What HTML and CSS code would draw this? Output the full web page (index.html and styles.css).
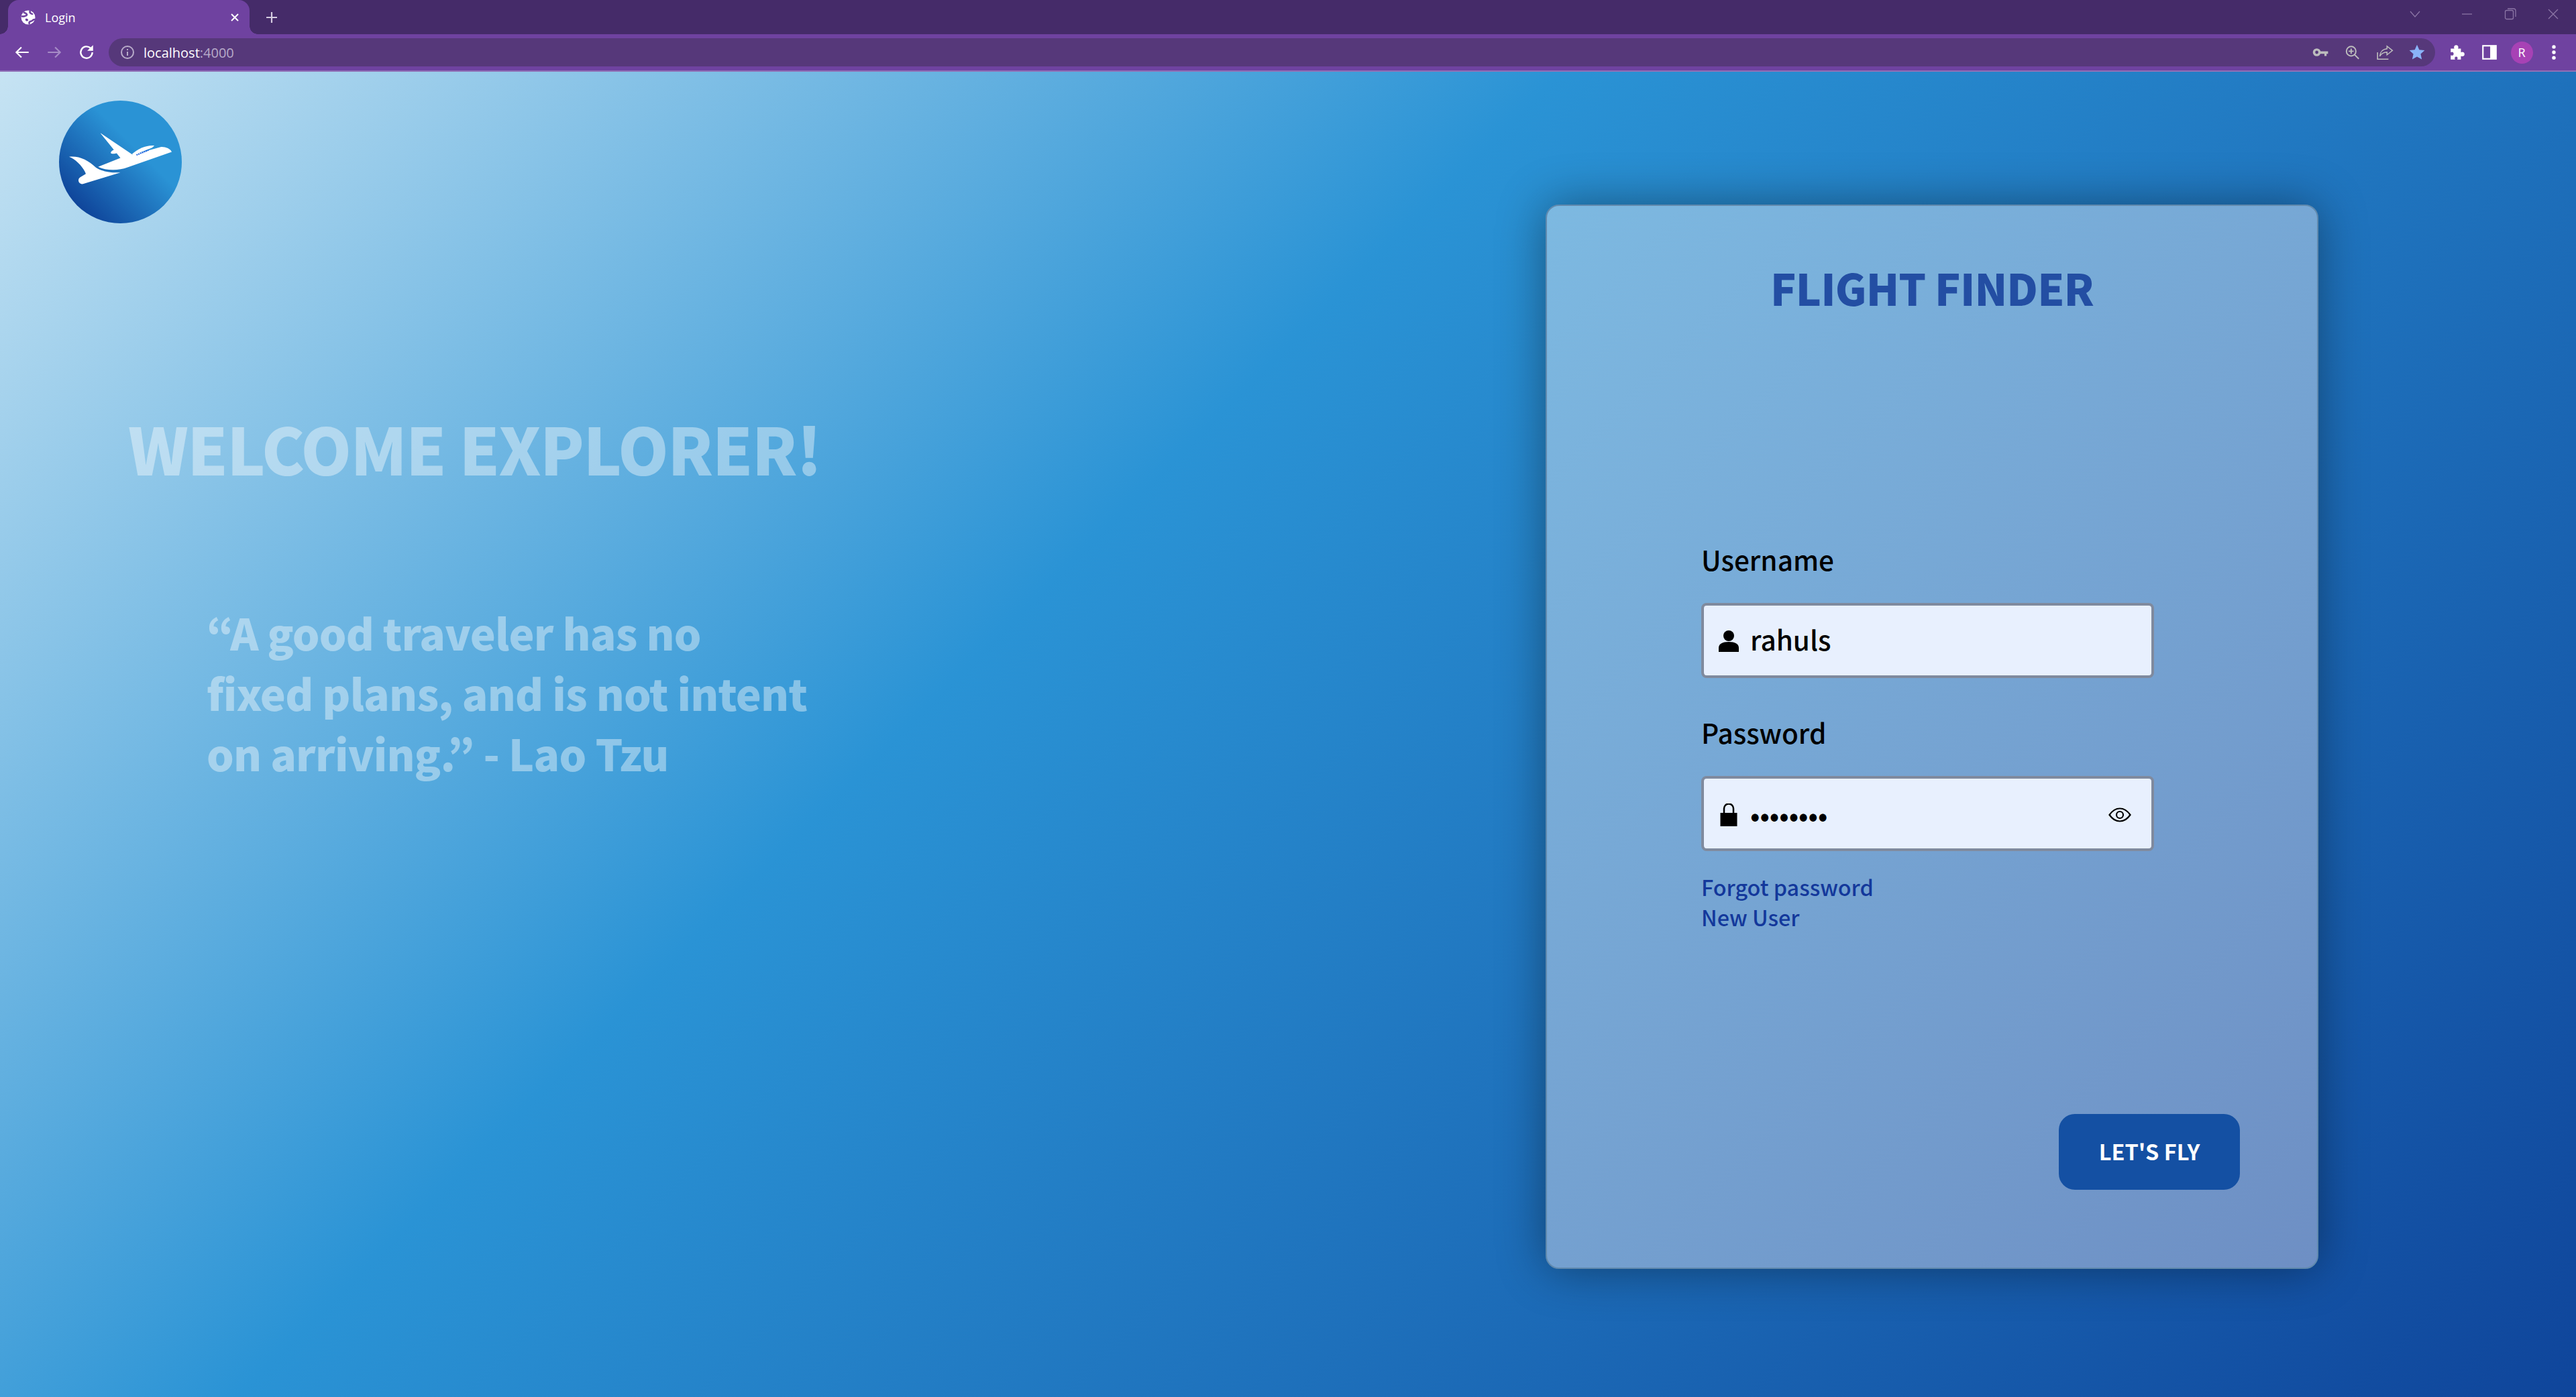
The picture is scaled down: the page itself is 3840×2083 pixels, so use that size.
FILE: index.html
```html
<!DOCTYPE html>
<html lang="en">
<head>
  <meta charset="UTF-8">
  <title>Login</title>
  <link rel="stylesheet" href="styles.css">
</head>
<body>
  <div class="page">
    <!-- Browser chrome -->
    <div class="browser">
      <div class="tabstrip">
        <div class="tab">
          <svg class="favicon" viewBox="0 0 22 22"><circle cx="11" cy="11" r="10.5" fill="#fff"/><path d="M4 3.500c2 .5 4 1 5 3 .5 1.500-1.500 2-3 2.500S3 10 1 9M13 21c-1-2-.5-3.500 1-4 1.500-.5 3-.5 4-2 1-1 2-1 3.500-1M14 1c-1 2-.5 3 1 4s2 1 3 .5" fill="none" stroke="#6f42a0" stroke-width="2.600"/><path d="M7 13c2-.5 3.500 0 4 1.500s-1 2-2.500 2-2-2.500-1.500-3.500z" fill="#6f42a0"/></svg>
          <span class="tab-title">Login</span>
          <svg class="tab-close" viewBox="0 0 14 14"><path d="M2 2l10 10M12 2L2 12" stroke="#fff" stroke-width="2"/></svg>
        </div>
        <svg class="new-tab" viewBox="0 0 18 18"><path d="M9 1v16M1 9h16" stroke="#d5cce0" stroke-width="2.200"/></svg>
        <div class="window-controls">
          <svg class="chevron" viewBox="0 0 18 18"><path d="M2 5l7 8 7-8" fill="none" stroke="#8b75a5" stroke-width="1.300"/></svg>
          <svg viewBox="0 0 18 18"><path d="M1 9h15" stroke="#8b75a5" stroke-width="1.300"/></svg>
          <svg viewBox="0 0 18 18"><rect x="1.500" y="3.500" width="12" height="13" rx="2" fill="none" stroke="#8b75a5" stroke-width="1.300"/><path d="M5 1h9a3 3 0 0 1 3 3v9" fill="none" stroke="#8b75a5" stroke-width="1.300"/></svg>
          <svg viewBox="0 0 18 18"><path d="M2 2l14 14M16 2L2 16" stroke="#8b75a5" stroke-width="1.300"/></svg>
        </div>
      </div>
      <div class="toolbar">
        <div class="nav-btn"><svg viewBox="0 0 24 24"><path d="M21 12H4M11 5l-7 7 7 7" fill="none" stroke="#fff" stroke-width="2"/></svg></div>
        <div class="nav-btn"><svg viewBox="0 0 24 24"><path d="M3 12h17M13 5l7 7-7 7" fill="none" stroke="#a68bc6" stroke-width="2"/></svg></div>
        <div class="nav-btn"><svg viewBox="0 0 24 24"><path d="M20 12a8 8 0 1 1-2.500-5.800" fill="none" stroke="#fff" stroke-width="2.200"/><path d="M21 2v8h-8z" fill="#fff"/></svg></div>
        <div class="omnibox">
          <svg class="info" viewBox="0 0 22 22"><circle cx="11" cy="11" r="9" fill="none" stroke="#b8abc9" stroke-width="2"/><path d="M11 10v6M11 6v2" stroke="#b8abc9" stroke-width="2"/></svg>
          <span class="url">localhost<span class="url-port">:4000</span></span>
          <div class="omni-icons">
            <div class="nav-btn"><svg viewBox="0 0 24 24"><circle cx="7" cy="12" r="3.800" fill="none" stroke="#bdbdbd" stroke-width="3.200"/><path d="M10 10.500h12.500v3.500h-2v3h-3v-3H10z" fill="#bdbdbd"/></svg></div>
            <div class="nav-btn"><svg viewBox="0 0 24 24"><circle cx="10" cy="10.500" r="6.500" fill="none" stroke="#bdbdbd" stroke-width="1.800"/><path d="M14.800 15.300l5.700 5.700M10 7v7M6.500 10.500h7" stroke="#bdbdbd" stroke-width="1.800"/></svg></div>
            <div class="nav-btn"><svg viewBox="0 0 24 24"><path d="M2 12v9.500h15" fill="none" stroke="#bdbdbd" stroke-width="1.500"/><path d="M15 3.500l7.500 6-7.500 6v-3.700c-4.500 0-7.500 1.500-10 5.700.5-5.500 4-9.800 10-10.300z" fill="none" stroke="#bdbdbd" stroke-width="1.400"/></svg></div>
            <div class="nav-btn"><svg viewBox="0 0 24 24"><path d="M12 1.500l3.100 7 7.400.8-5.500 5 1.600 7.400-6.600-3.800-6.600 3.800 1.600-7.400-5.500-5 7.400-.8z" fill="#8ab4f8"/></svg></div>
          </div>
        </div>
        <div class="nav-btn puzzle"><svg viewBox="0 0 24 24"><path d="M3 7h5c-1-2-.5-5 2.500-5S14 5 13 7h4v5c2-1 5-.5 5 2.500S19 18 17 17v5h-5c1-2 .5-4-1.500-4S8 20 9 22H3v-6c2 1 4 .5 4-2s-2-3-4-2z" fill="#fff"/></svg></div>
        <div class="nav-btn"><svg viewBox="0 0 24 24"><rect x="3" y="3" width="18" height="18" fill="none" stroke="#fff" stroke-width="2"/><rect x="13" y="3" width="8" height="18" fill="#fff"/></svg></div>
        <div class="nav-btn"><span class="avatar">R</span></div>
        <div class="nav-btn"><svg viewBox="0 0 24 24"><circle cx="12" cy="4.500" r="2.500" fill="#fff"/><circle cx="12" cy="12" r="2.500" fill="#fff"/><circle cx="12" cy="19.500" r="2.500" fill="#fff"/></svg></div>
      </div>
    </div>

    <!-- Page -->
    <div class="main">
      <div class="intro">
        <svg class="logo" viewBox="85 60 550 550">
          <defs>
            <linearGradient id="logo-fill" x1="0" y1="1" x2="1" y2="0">
              <stop offset="0.08" stop-color="#0b3a92"/>
              <stop offset="0.62" stop-color="#2a93d5"/>
            </linearGradient>
          </defs>
          <circle cx="360" cy="335" r="275" fill="url(#logo-fill)"/>
          <path d="M130 312c40-6 85 13 120 48 25 18 70 25 110 22L195 433c-23 6-30-21-15-30l25-15c-10-28-45-66-75-76z" fill="#fff"/>
          <path d="M260 357l100-40-90-112 145 98 125-35c20-2 45 8 50 22l-200 70c-35 14-95 15-130-3z" fill="#fff"/>
          <path d="M270 205l75 70c-10 2-30 12-28 20 4 6 20 2 30 0l43 50z" fill="#fff"/>
          <path d="M412 300c25-25 70-42 100-38l-10 9-85 34z" fill="#fff"/>
          <path d="M432 304l54-22" stroke="#1a5fe0" stroke-width="6" stroke-dasharray="6 3"/>
        </svg>
        <h1 class="welcome">WELCOME EXPLORER!</h1>
        <p class="quote">“A good traveler has no<br>fixed plans, and is not intent<br>on arriving.” - Lao Tzu</p>
      </div>

      <div class="card">
        <h2 class="card-title">FLIGHT FINDER</h2>
        <form class="login-form">
          <label class="field-label" for="username">Username</label>
          <div class="field">
            <svg class="field-icon" viewBox="0 0 30 32"><circle cx="15" cy="8" r="8"/><path d="M0 32v-6c0-6 6-9 15-9s15 3 15 9v6z"/></svg>
            <input class="text-input" id="username" type="text" value="rahuls">
          </div>
          <label class="field-label password-label" for="password">Password</label>
          <div class="field">
            <svg class="lock-icon" viewBox="0 0 30 34"><path d="M8 15V7.500a7 7 0 0 1 14 0V15" fill="none" stroke="#000" stroke-width="2.500"/><rect x="2.500" y="14" width="25" height="20"/></svg>
            <input id="password" type="password" value="rahuls12">
            <svg class="eye" viewBox="0 0 34 22"><path d="M1.500 11C6 4.500 11 1.500 17 1.500S28 4.500 32.500 11C28 17.500 23 20.500 17 20.500S6 17.500 1.500 11z" fill="none" stroke="#000" stroke-width="2.200"/><circle cx="17" cy="11" r="5" fill="none" stroke="#000" stroke-width="2.200"/></svg>
          </div>
          <a class="form-link" href="#">Forgot password</a>
          <a class="form-link" href="#">New User</a>
        </form>
        <button class="fly-btn" type="button">LET'S FLY</button>
      </div>
    </div>
  </div>
</body>
</html>
```

FILE: styles.css
```css
html, body {
  margin: 0;
  padding: 0;
}

body {
  font-family: "Noto Sans CJK JP", "Noto Sans", sans-serif;
}

.page {
  height: 100vh;
  display: flex;
  flex-direction: column;
  overflow: hidden;
}

/* Browser chrome */
.browser {
  font-family: "Open Sans", "Noto Sans", sans-serif;
  color: #fff;
}

.tabstrip {
  height: 51px;
  background-color: #452b69;
  display: flex;
  align-items: center;
  padding-left: 12px;
}

.tab {
  position: relative;
  width: 360px;
  height: 51px;
  box-sizing: border-box;
  background-color: #6f42a0;
  border-radius: 16px 16px 0 0;
  display: flex;
  align-items: center;
  padding: 0 15px 0 19px;
}

/* little curves where the tab meets the toolbar */
.tab::before,
.tab::after {
  content: "";
  position: absolute;
  bottom: 0;
  width: 12px;
  height: 12px;
}

.tab::before {
  left: -12px;
  background: radial-gradient(circle at 0 0, #452b69 11.500px, #6f42a0 12px);
}

.tab::after {
  right: -12px;
  background: radial-gradient(circle at 100% 0, #452b69 11.500px, #6f42a0 12px);
}

.favicon {
  width: 22px;
  height: 22px;
}

.tab-title {
  margin-left: 14px;
  font-size: 18px;
  flex: 1;
}

.tab-close {
  width: 14px;
  height: 14px;
}

.new-tab {
  width: 18px;
  height: 18px;
  margin-left: 24px;
}

.window-controls {
  margin-left: auto;
  display: flex;
  align-items: center;
  gap: 46px;
  padding: 0 25px 10px 0;
}

.window-controls svg {
  width: 18px;
  height: 18px;
}

.window-controls .chevron {
  margin-right: 14px;
}

.toolbar {
  height: 54px;
  background-color: #6f42a0;
  border-bottom: 2px solid #9071b6;
  display: flex;
  align-items: center;
  padding-left: 9px;
}

.nav-btn {
  width: 48px;
  height: 42px;
  display: flex;
  align-items: center;
  justify-content: center;
  flex: none;
}

.nav-btn svg {
  width: 26px;
  height: 26px;
}

.omnibox {
  width: 3468px;
  height: 42px;
  margin-left: 9px;
  background-color: #56387a;
  border-radius: 21px;
  display: flex;
  align-items: center;
  padding-left: 17px;
  box-sizing: border-box;
}

.info {
  width: 22px;
  height: 22px;
}

.url {
  margin-left: 13px;
  font-size: 20px;
}

.url-port {
  color: #b8abc9;
}

.omni-icons {
  margin-left: auto;
  display: flex;
  padding-right: 3px;
}

.puzzle {
  margin-left: 9px;
}

.avatar {
  width: 33px;
  height: 33px;
  border-radius: 50%;
  background-color: #a742b5;
  font-size: 18px;
  display: flex;
  align-items: center;
  justify-content: center;
}

/* Page */
.main {
  flex: 1;
  display: flex;
  justify-content: space-between;
  background: linear-gradient(135deg, #c6e3f3 0%, #2a93d5 40%, #0f459b 100%);
}

.intro {
  padding: 43px 0 0 88px;
}

.logo {
  display: block;
  width: 183px;
  height: 183px;
}

.welcome {
  margin: 275px 0 0 103px;
  font-size: 96px;
  line-height: 120px;
  font-weight: 900;
  letter-spacing: -1.500px;
  color: rgba(255, 255, 255, 0.4);
  white-space: nowrap;
}

.quote {
  margin: 169px 0 0 220px;
  font-size: 64px;
  line-height: 90px;
  font-weight: 900;
  letter-spacing: -0.800px;
  color: rgba(255, 255, 255, 0.4);
  white-space: nowrap;
}

.card {
  width: 1152px;
  height: 1587px;
  box-sizing: border-box;
  margin: 198px 384px 0 0;
  border: 2px solid #6089ad;
  border-radius: 20px;
  background: linear-gradient(135deg, #7db9e1 0%, #6e8fc4 100%);
  box-shadow: 0 0 70px rgba(0, 0, 0, 0.4);
  padding: 81px 115px 116px 230px;
  display: flex;
  flex-direction: column;
}

.card-title {
  margin: 0 -115px 0 -230px;
  text-align: center;
  font-size: 64px;
  line-height: 80px;
  font-weight: 900;
  letter-spacing: -0.900px;
  color: #234ea3;
}

.login-form {
  flex: 1;
  display: flex;
  flex-direction: column;
  align-items: flex-start;
  padding-top: 341px;
}

.field-label {
  font-size: 40.500px;
  line-height: 50px;
  font-weight: 500;
  color: #000;
}

.password-label {
  margin-top: 26px;
}

.field {
  width: 675px;
  height: 112px;
  box-sizing: border-box;
  margin: 40px 0 30px;
  background-color: #e8f0fe;
  border: 4px solid #7f8a9e;
  border-radius: 8px;
  display: flex;
  align-items: center;
  padding: 0 30px 0 22px;
}

.password-label + .field {
  margin-bottom: 31px;
}

.field-icon,
.lock-icon {
  width: 30px;
  height: 32px;
  flex: none;
  margin-top: 2px;
}

.lock-icon {
  height: 34px;
  margin-top: 4px;
}

.field input {
  flex: 1;
  min-width: 0;
  margin-left: 17px;
  padding: 0;
  border: none;
  outline: none;
  background: transparent;
  font-family: inherit;
  font-size: 40.500px;
  font-weight: 500;
  color: #000;
}

.field .text-input {
  padding-bottom: 5px;
}

.eye {
  width: 34px;
  height: 22px;
  flex: none;
  margin-top: 4px;
}

.form-link {
  font-size: 32.300px;
  line-height: 45px;
  font-weight: 500;
  color: #13389b;
  text-decoration: none;
}

.fly-btn {
  align-self: flex-end;
  width: 270px;
  height: 113px;
  padding: 0 0 5px;
  border: none;
  border-radius: 24px;
  background-color: #1450a3;
  color: #fff;
  font-family: inherit;
  font-size: 32.500px;
  font-weight: 700;
}
```
